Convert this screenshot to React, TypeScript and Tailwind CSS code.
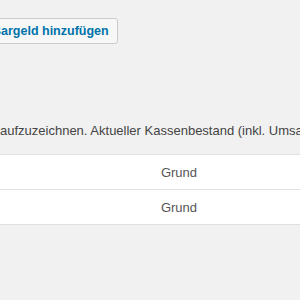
import React from 'react';

const rows = ['Grund', 'Grund'];

const App: React.FC = () => {
  return (
    <div className="w-[300px] h-[300px] overflow-hidden bg-[#f1f1f1] font-['Liberation_Sans',Arial,sans-serif]">
      <div className="pt-[18px]">
        <button className="ml-[-19px] h-[26px] pl-[10px] pr-[8px] border border-[#cccccc] bg-[#f7f7f7] rounded-[3px] text-[12.5px] font-bold text-[#0073aa] leading-none whitespace-nowrap">
          Bargeld hinzufügen
        </button>
      </div>

      <p className="mt-[78px] text-[13px] text-[#444444] whitespace-nowrap leading-[18px]">
        aufzuzeichnen. Aktueller Kassenbestand (inkl. Umsatz) ist
      </p>

      <div className="mt-[14px] w-[320px] border-t border-[#e1e1e1]">
        {rows.map((label, i) => (
          <div key={i} className="flex h-[35px] bg-white border-b border-[#e1e1e1] items-center text-[13px] text-[#555555]">
            <div className="w-[120px]" />
            <div className="w-[118px] text-center">{label}</div>
          </div>
        ))}
      </div>
    </div>
  );
};

export default App;
